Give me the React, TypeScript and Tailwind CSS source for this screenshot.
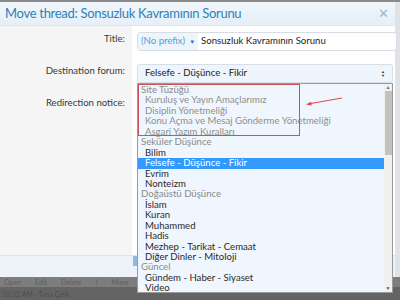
import React from 'react';

type Row = { label: string; kind: 'group' | 'disabled' | 'item' | 'selected' };

const rows: Row[] = [
  { label: 'Site Tüzüğü', kind: 'group' },
  { label: 'Kuruluş ve Yayın Amaçlarımız', kind: 'disabled' },
  { label: 'Disiplin Yönetmeliği', kind: 'disabled' },
  { label: 'Konu Açma ve Mesaj Gönderme Yönetmeliği', kind: 'disabled' },
  { label: 'Asgari Yazım Kuralları', kind: 'disabled' },
  { label: 'Seküler Düşünce', kind: 'group' },
  { label: 'Bilim', kind: 'item' },
  { label: 'Felsefe - Düşünce - Fikir', kind: 'selected' },
  { label: 'Evrim', kind: 'item' },
  { label: 'Nonteizm', kind: 'item' },
  { label: 'Doğaüstü Düşünce', kind: 'group' },
  { label: 'İslam', kind: 'item' },
  { label: 'Kuran', kind: 'item' },
  { label: 'Muhammed', kind: 'item' },
  { label: 'Hadis', kind: 'item' },
  { label: 'Mezhep - Tarikat - Cemaat', kind: 'item' },
  { label: 'Diğer Dinler - Mitoloji', kind: 'item' },
  { label: 'Güncel', kind: 'group' },
  { label: 'Gündem - Haber - Siyaset', kind: 'item' },
  { label: 'Video', kind: 'item' },
];

const rowClass: Record<Row['kind'], string> = {
  group: 'pl-[3px] text-[#8a8a8a]',
  disabled: 'pl-[7px] text-[#8f8f8f]',
  item: 'pl-[7px] text-[#2a2a2a]',
  selected: 'pl-[7px] text-white bg-[#3399ff]',
};

const FormRow = ({ label, children, className }: { label: string; children?: React.ReactNode; className?: string }) => (
  <div className={`flex ${className ?? ''}`}>
    <div className="w-[132px] shrink-0 pr-[7px] text-right text-[9.6px] text-[#3a3a3a]">{label}</div>
    <div className="flex-1 pl-[5px]">{children}</div>
  </div>
);

const DropdownList = () => (
  <div className="absolute left-0 top-[19px] z-10 w-[256px] h-[210px] border border-[#9a9a9a] bg-[#f0f6fd] flex">
    <div className="relative flex-1 pt-[1px]">
      {rows.map((r) => (
        <div key={r.label} className={`h-[10.45px] leading-[10.45px] text-[9.6px] whitespace-nowrap ${rowClass[r.kind]}`}>
          {r.label}
        </div>
      ))}
      {/* red annotation box */}
      <div className="absolute left-0 top-0 w-[162px] h-[52px] border border-[#c9535b]"></div>
      {/* red arrow */}
      <svg className="absolute left-[166px] top-[12px]" width="40" height="12" viewBox="0 0 40 12">
        <line x1="38" y1="2" x2="4" y2="8" stroke="#d44a4a" strokeWidth="1" />
        <path d="M2 8.4 L7 5.8 L7.6 9.6 Z" fill="#d44a4a" />
      </svg>
    </div>
    {/* scrollbar */}
    <div className="w-[8px] bg-[#f0f0f0] flex flex-col items-center">
      <div className="h-[7px] text-[5px] leading-[7px] text-[#777]">▲</div>
      <div className="w-[7px] h-[64px] bg-[#c2c2c2]"></div>
      <div className="flex-1"></div>
      <div className="h-[7px] text-[5px] leading-[7px] text-[#555]">▼</div>
    </div>
  </div>
);

export default function App() {
  return (
    <div className="w-[400px] h-[300px] overflow-hidden bg-[#6f6f6f] flex flex-col" style={{ fontFamily: 'Lato, "Noto Sans", sans-serif' }}>
      <div className="h-[2px] bg-[#8a8a8a] shrink-0"></div>
      <div className="flex shrink-0">
        {/* dialog */}
        <div className="w-[395px] h-[275px] bg-white flex flex-col">
          <div className="h-[24px] flex items-center justify-between px-[5px] bg-gradient-to-b from-[#f0f6fb] to-[#e6eff8] border-b border-[#dde7f0]">
            <span className="text-[13px] tracking-[-0.3px] text-[#2f7fbb] leading-none">Move thread: Sonsuzluk Kavramının Sorunu</span>
            <span className="text-[#9bb7cf] text-[13px] leading-none mr-[1px]">✕</span>
          </div>
          <div className="flex-1 flex flex-col bg-[#f5f5f5] relative">
            <div className="absolute left-[132px] top-0 bottom-0 right-0 bg-white"></div>
            <FormRow label="Title:" className="relative pt-[6px] h-[37px]">
              <div className="flex h-[19px] border border-[#d8dde3] rounded-[3px] bg-white items-stretch w-[260px]">
                <div className="flex items-center gap-[4px] px-[3px] bg-[#eef4fb] text-[9.6px] text-[#4aa1e0]">
                  <span>(No prefix)</span>
                  <span className="text-[6px] text-[#2a6fb0]">▼</span>
                </div>
                <div className="flex items-center pl-[3px] text-[9.6px] text-[#222]">Sonsuzluk Kavramının Sorunu</div>
              </div>
            </FormRow>
            <FormRow label="Destination forum:" className="relative z-10 h-[33px] pt-[1px] items-start">
              <div className="relative w-[256px]">
                <div className="flex items-center justify-between h-[19px] border border-[#d6dfe8] rounded-[3px] bg-[#eef5fc] px-[7px] text-[9.6px] text-[#222]">
                  <span>Felsefe - Düşünce - Fikir</span>
                  <span className="flex flex-col text-[4px] leading-[4px] text-[#333]">
                    <span>▲</span>
                    <span>▼</span>
                  </span>
                </div>
                <DropdownList />
              </div>
            </FormRow>
            <FormRow label="Redirection notice:" className="relative h-[20px] items-start" />
            <div className="flex-1"></div>
          </div>
          <div className="h-[22px] bg-[#edf3f9] border-t border-[#dbe5ee] relative">
            <div className="absolute left-[133px] top-0 w-[6px] h-[10px] bg-[#8fbbe0]"></div>
          </div>
        </div>
        <div className="flex-1 bg-[#dfe3e7]"></div>
      </div>
      <div className="h-[10px] bg-[#7d7d7d] flex items-center gap-[14px] pl-[4px] text-[7px] text-[#5e5e5e] shrink-0">
        <span>Open</span>
        <span>Edit</span>
        <span>Delete</span>
        <span>|</span>
        <span>Move</span>
      </div>
      <div className="flex-1 bg-[#646464] flex items-end pl-[2px] pb-[1px] text-[7px] text-[#4f4f4f]">
        <span>10:32 AM · Tuna Çelik</span>
      </div>
    </div>
  );
}
